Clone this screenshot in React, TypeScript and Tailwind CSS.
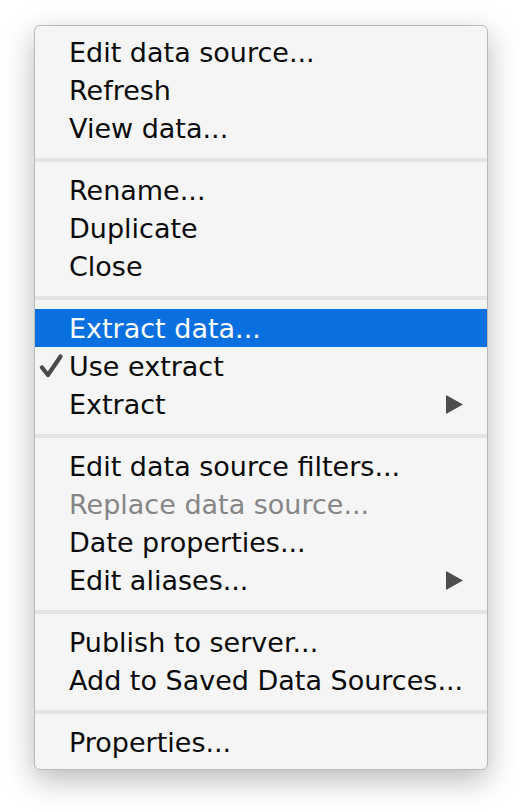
import React from "react";

type Item = {
  label: string;
  checked?: boolean;
  submenu?: boolean;
  disabled?: boolean;
  active?: boolean;
};

const sections: Item[][] = [
  [{ label: "Edit data source..." }, { label: "Refresh" }, { label: "View data..." }],
  [{ label: "Rename..." }, { label: "Duplicate" }, { label: "Close" }],
  [
    { label: "Extract data...", active: true },
    { label: "Use extract", checked: true },
    { label: "Extract", submenu: true },
  ],
  [
    { label: "Edit data source filters..." },
    { label: "Replace data source...", disabled: true },
    { label: "Date properties..." },
    { label: "Edit aliases...", submenu: true },
  ],
  [{ label: "Publish to server..." }, { label: "Add to Saved Data Sources..." }],
  [{ label: "Properties..." }],
];

const Check = () => (
  <svg width="24" height="24" viewBox="0 0 24 24" fill="none">
    <path d="M3 13.5 L9 21 L21.5 2.5" stroke="#4a4a4a" strokeWidth="4.2" strokeLinecap="round" strokeLinejoin="round" />
  </svg>
);

const Arrow = () => (
  <svg width="17" height="19" viewBox="0 0 17 19">
    <polygon points="0,0 17,9.5 0,19" fill="#4d4d4d" />
  </svg>
);

function Row({ item }: { item: Item }) {
  const color = item.active ? "bg-[#0a70e0] text-white" : item.disabled ? "text-[#868686]" : "text-[#0a0a0a]";
  return (
    <div className={`flex items-center h-[38px] ${color}`}>
      <div className="w-[34px] shrink-0 pl-[4px] flex items-center">{item.checked && <Check />}</div>
      <span className="flex-1 min-w-0 leading-none whitespace-nowrap">{item.label}</span>
      <div className="w-[48px] shrink-0 flex justify-end pr-[24px]">{item.submenu && <Arrow />}</div>
    </div>
  );
}

export default function App() {
  return (
    <div className="min-h-screen bg-white pt-[25px] pl-[34px]" style={{ fontFamily: '"DejaVu Sans", Verdana, sans-serif' }}>
      <div className="w-[454px] rounded-[6px] border border-[#b9b9b9] bg-[#f5f5f5] pt-[7px] pb-[8px] text-[27px] shadow-[0_10px_30px_rgba(0,0,0,0.28)] overflow-hidden">
        {sections.map((sec, i) => (
          <div key={i}>
            {i > 0 && <div className="mt-[11px] mb-[9px] h-[4px] bg-[#e4e4e4]" />}
            {sec.map((it) => (
              <Row key={it.label} item={it} />
            ))}
          </div>
        ))}
      </div>
    </div>
  );
}
